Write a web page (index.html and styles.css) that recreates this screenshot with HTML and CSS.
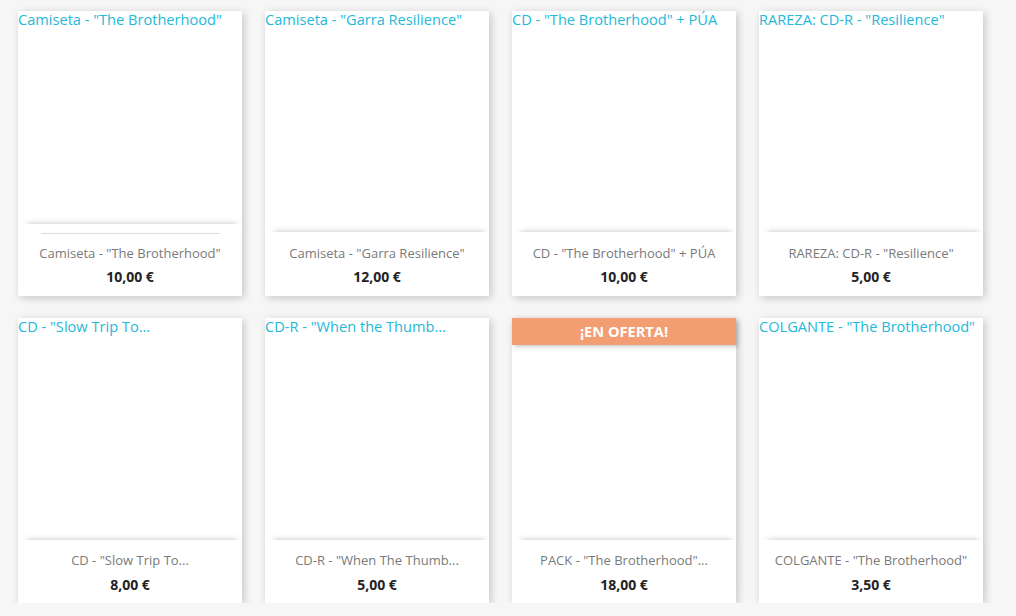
FILE: index.html
```html
<!DOCTYPE html>
<html lang="es">
<head>
<meta charset="utf-8">
<title>Productos</title>
<link rel="stylesheet" href="styles.css">
</head>
<body>
<div class="products">
  <article class="card">
    <div class="thumb">Camiseta - "The Brotherhood"</div>
    <div class="desc desc-first">
      <hr class="rule">
      <div class="title">Camiseta - "The Brotherhood"</div>
      <div class="price">10,00 €</div>
    </div>
  </article>
  <article class="card">
    <div class="thumb">Camiseta - "Garra Resilience"</div>
    <div class="desc">
      <div class="title">Camiseta - "Garra Resilience"</div>
      <div class="price">12,00 €</div>
    </div>
  </article>
  <article class="card">
    <div class="thumb">CD - "The Brotherhood" + PÚA</div>
    <div class="desc">
      <div class="title">CD - "The Brotherhood" + PÚA</div>
      <div class="price">10,00 €</div>
    </div>
  </article>
  <article class="card">
    <div class="thumb">RAREZA: CD-R - "Resilience"</div>
    <div class="desc">
      <div class="title">RAREZA: CD-R - "Resilience"</div>
      <div class="price">5,00 €</div>
    </div>
  </article>
  <article class="card">
    <div class="thumb">CD - "Slow Trip To...</div>
    <div class="desc desc-low">
      <div class="title">CD - "Slow Trip To...</div>
      <div class="price">8,00 €</div>
    </div>
  </article>
  <article class="card">
    <div class="thumb">CD-R - "When the Thumb...</div>
    <div class="desc desc-low">
      <div class="title">CD-R - "When The Thumb...</div>
      <div class="price">5,00 €</div>
    </div>
  </article>
  <article class="card">
    <div class="thumb"></div>
    <div class="flag">¡En oferta!</div>
    <div class="desc desc-low">
      <div class="title">PACK - "The Brotherhood"...</div>
      <div class="price">18,00 €</div>
    </div>
  </article>
  <article class="card">
    <div class="thumb">COLGANTE - "The Brotherhood"</div>
    <div class="desc desc-low">
      <div class="title">COLGANTE - "The Brotherhood"</div>
      <div class="price">3,50 €</div>
    </div>
  </article>
</div>
</body>
</html>
```
FILE: styles.css
```css
html, body {
  margin: 0;
  padding: 0;
  background: #f6f6f6;
  font-family: "Open Sans", "Noto Sans", sans-serif;
}

.products {
  display: grid;
  grid-template-columns: repeat(4, 224px);
  grid-auto-rows: 285px;
  column-gap: 23px;
  row-gap: 22px;
  padding: 11px 0 0 18px;
}

.card {
  position: relative;
  display: flex;
  flex-direction: column;
  background: #fff;
  box-shadow: 2px 2px 8px 0 rgba(0, 0, 0, 0.2);
}

.thumb {
  flex: 1;
  color: #24b9d7;
  font-size: 14.6px;
  line-height: 17px;
  white-space: nowrap;
}

.desc {
  position: relative;
  height: 64px;
  box-sizing: border-box;
  padding-top: 12px;
  background: #fff;
  text-align: center;
  box-shadow: 2px -7px 6px -7px rgba(0, 0, 0, 0.25);
}

.desc-first {
  height: 72px;
  padding-top: 9px;
}

.desc-low {
  height: 63px;
  padding-top: 11px;
}

.rule {
  width: 179px;
  height: 0;
  margin: 0 auto 10px;
  border: 0;
  border-top: 1px solid #dcdcdc;
}

.title {
  color: #7a7a7a;
  font-size: 13px;
  line-height: 18px;
  white-space: nowrap;
}

.price {
  margin-top: 6px;
  color: #232323;
  font-size: 14px;
  font-weight: 700;
  line-height: 18px;
}

.desc-low .price {
  margin-top: 7px;
}

.flag {
  position: absolute;
  top: 0;
  left: 0;
  right: 0;
  height: 27px;
  line-height: 27px;
  background: #f39d72;
  color: #fff;
  font-size: 14.6px;
  font-weight: 700;
  text-align: center;
  text-transform: uppercase;
  box-shadow: 2px 2px 4px 0 rgba(0, 0, 0, 0.2);
}
```
